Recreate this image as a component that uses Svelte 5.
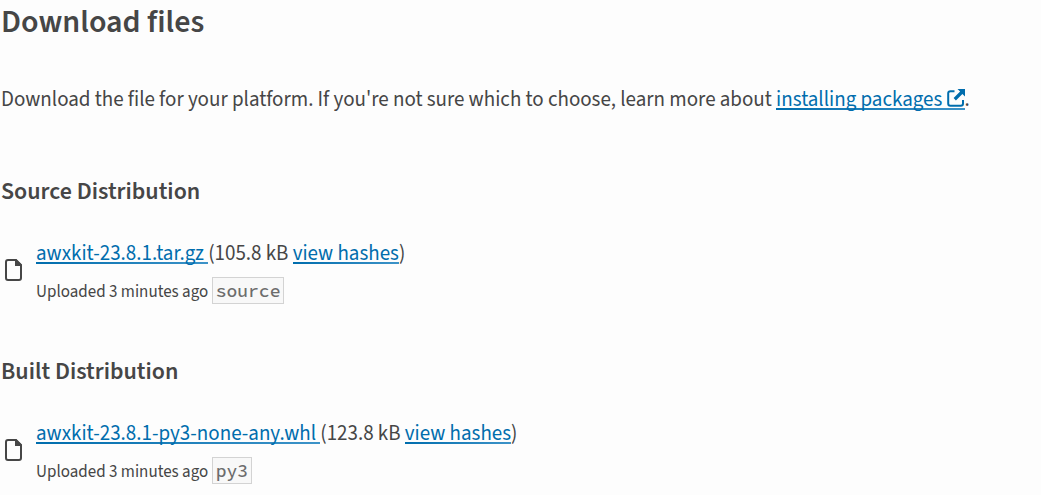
<script>
  const groups = [
    { title: 'Source Distribution', file: 'awxkit-23.8.1.tar.gz', size: '105.8 kB', tag: 'source' },
    { title: 'Built Distribution', file: 'awxkit-23.8.1-py3-none-any.whl', size: '123.8 kB', tag: 'py3' }
  ];
</script>

<main>
  <h2>Download files</h2>
  <p class="intro">Download the file for your platform. If you're not sure which to choose, learn more about <a href="#packages">installing packages <svg class="external" viewBox="0 0 18 18" aria-hidden="true"><path class="frame" d="M7.5 2.2H3.5Q1.2 2.2 1.2 4.2v10.4q0 2.2 2.2 2.2h10.4q2.2 0 2.2-2.2V11" /><path class="arrow" d="M10.5 0H18v7.5l-2.6-2.6-6.5 6.5-2.3-2.3 6.5-6.5z" /></svg></a>.</p>

  {#each groups as group}
    <section>
      <h3>{group.title}</h3>
      <div class="file">
        <svg class="doc" viewBox="0 0 17 22" aria-hidden="true"><path d="M3 1h8l5 5v13q0 2-2 2H3q-2 0-2-2V3q0-2 2-2z" /><path class="fold" d="M10 0h1l6 6v1h-7z" /></svg>
        <div>
          <p class="name"><a href="#file">{group.file}{' '}</a> ({group.size} <a href="#hashes">view hashes</a>)</p>
          <p class="meta">Uploaded 3 minutes ago <code>{group.tag}</code></p>
        </div>
      </div>
    </section>
  {/each}
</main>

<style>
  :global(body) { margin: 0; background: #fdfdfd; }
  main { padding: 0 1px; color: #464646; font: 21px/30px "Source Sans 3", "Source Sans Pro", "Noto Sans CJK SC", sans-serif; }
  h2, h3, p { margin: 0; }
  h2 { padding-top: 2px; font-size: 32px; line-height: 40px; font-weight: 600; }
  h3 { font-size: 24px; line-height: 30px; font-weight: 600; }
  .intro { margin-top: 42px; }
  section { margin-top: 63px; }
  section + section { margin-top: 50px; }
  a { color: #006dad; text-decoration: none; background: linear-gradient(90deg, #006dad, #3d93c8) 0 calc(100% - 4px) / 100% 2px no-repeat; }
  .external { width: 18px; height: 18px; vertical-align: -1px; }
  .frame { fill: none; stroke: #006dad; stroke-width: 2; }
  .arrow { fill: #006dad; }
  .file { display: flex; align-items: flex-start; gap: 14px; margin-top: 31px; padding-left: 4px; }
  .doc { width: 17px; height: 22px; margin-top: 21px; fill: none; stroke: #464646; stroke-width: 2; }
  .fold { fill: #464646; stroke: none; }
  .meta { margin-top: 9px; font-size: 17px; }
  code { display: inline-block; padding: 0 3px; border: 1px solid #d3d3d3; background: #f8f8f8; color: #6c6c6c; font: 500 18px/25px "Source Code Pro", "DejaVu Sans Mono", monospace; }
</style>
